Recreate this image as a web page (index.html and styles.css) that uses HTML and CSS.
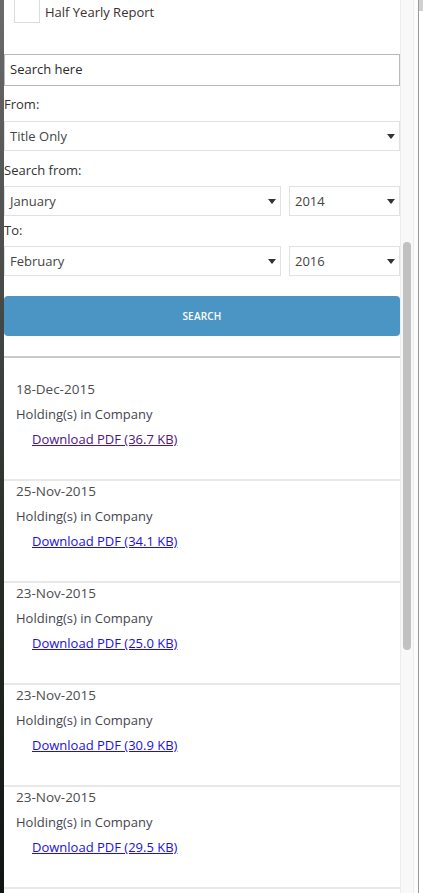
FILE: index.html
```html
<!DOCTYPE html>
<html>
<head>
<meta charset="utf-8">
<link rel="stylesheet" href="styles.css">
</head>
<body>
<div class="frame">
  <div class="backdrop"></div>
  <div class="panel">
    <div class="check-row">
      <span class="checkbox"></span>
      <span class="check-label">Half Yearly Report</span>
    </div>
    <div class="search-input">Search here</div>
    <div class="label label-from">From:</div>
    <div class="select">
      <span>Title Only</span>
      <span class="caret"></span>
    </div>
    <div class="label label-sfrom">Search from:</div>
    <div class="select-row">
      <div class="select grow"><span>January</span><span class="caret"></span></div>
      <div class="select year"><span>2014</span><span class="caret"></span></div>
    </div>
    <div class="label label-to">To:</div>
    <div class="select-row">
      <div class="select grow"><span>February</span><span class="caret"></span></div>
      <div class="select year"><span>2016</span><span class="caret"></span></div>
    </div>
    <div class="button">SEARCH</div>
    <div class="divider"></div>
    <div class="list">
      <div class="item">
        <div class="date">18-Dec-2015</div>
        <div class="title">Holding(s) in Company</div>
        <div class="link-line"><a class="link visited" href="#">Download PDF (36.7 KB)</a></div>
      </div>
      <div class="item">
        <div class="date">25-Nov-2015</div>
        <div class="title">Holding(s) in Company</div>
        <div class="link-line"><a class="link" href="#">Download PDF (34.1 KB)</a></div>
      </div>
      <div class="item">
        <div class="date">23-Nov-2015</div>
        <div class="title">Holding(s) in Company</div>
        <div class="link-line"><a class="link" href="#">Download PDF (25.0 KB)</a></div>
      </div>
      <div class="item">
        <div class="date">23-Nov-2015</div>
        <div class="title">Holding(s) in Company</div>
        <div class="link-line"><a class="link" href="#">Download PDF (30.9 KB)</a></div>
      </div>
      <div class="item">
        <div class="date">23-Nov-2015</div>
        <div class="title">Holding(s) in Company</div>
        <div class="link-line"><a class="link" href="#">Download PDF (29.5 KB)</a></div>
      </div>
    </div>
  </div>
  <div class="scrollbar"><div class="thumb"></div></div>
  <div class="gap"></div>
  <div class="edge-line"></div>
  <div class="edge"><div class="edge-top"></div></div>
</div>
</body>
</html>
```
FILE: styles.css
```css
html, body {
  margin: 0;
  padding: 0;
  height: 893px;
  overflow: hidden;
  background: #fff;
}
body {
  font-family: "Open Sans", "DejaVu Sans", sans-serif;
  font-size: 13px;
  color: #333;
}
.frame {
  display: flex;
  height: 893px;
  overflow: hidden;
}
.backdrop {
  width: 4px;
  flex: none;
  background: linear-gradient(to bottom, #6b6b6b 0%, #4a4d4a 30%, #2a2f2a 60%, #111511 100%);
}
.panel {
  width: 396px;
  flex: none;
  background: #fff;
}
.check-row {
  display: flex;
  align-items: center;
  height: 26px;
  margin-top: -3px;
}
.checkbox {
  width: 24px;
  height: 24px;
  border: 1px solid #dcdcdc;
  margin-left: 10px;
  box-sizing: content-box;
}
.check-label {
  margin-left: 5px;
  font-size: 13px;
  color: #3a3030;
  position: relative;
  top: 2px;
}
.search-input {
  margin-top: 31px;
  height: 32px;
  box-sizing: border-box;
  border: 1px solid #b9b9b9;
  padding-left: 5px;
  line-height: 28px;
  font-size: 13px;
  color: #2a2a2a;
}
.label {
  height: 18px;
  line-height: 18px;
  font-size: 13px;
  color: #333;
}
.label-from { margin-top: 9px; margin-bottom: 8px; }
.label-sfrom { margin-top: 10px; margin-bottom: 7px; }
.label-to { margin-top: 5px; margin-bottom: 7px; }
.select {
  height: 30px;
  box-sizing: border-box;
  border: 1px solid #e1e1e1;
  display: flex;
  align-items: center;
  justify-content: space-between;
  padding: 0 4px 0 5px;
  font-size: 13px;
  color: #444;
}
.caret {
  width: 0;
  height: 0;
  border-left: 4px solid transparent;
  border-right: 4px solid transparent;
  border-top: 5px solid #333;
  margin-top: 1px;
}
.select-row {
  display: flex;
  gap: 8px;
}
.grow { flex: 1; }
.year { width: 111px; flex: none; }
.button {
  margin-top: 20px;
  height: 40px;
  border-radius: 4px;
  background: #4b95c4;
  color: #fff;
  font-size: 10px;
  font-weight: 600;
  display: flex;
  align-items: center;
  justify-content: center;
  letter-spacing: 0.2px;
}
.divider {
  margin-top: 20px;
  height: 2px;
  background: #cacaca;
}
.list {
  padding-top: 21px;
}
.item {
  padding: 0 0 27px 12px;
  border-bottom: 2px solid #e8e8e8;
}
.date {
  height: 20px;
  line-height: 20px;
  color: #4d4d4d;
  font-size: 13.5px;
}
.title {
  margin-top: 3px;
  height: 24px;
  line-height: 24px;
  color: #444650;
}
.link-line {
  height: 26px;
  line-height: 26px;
  padding-left: 16px;
}
.link {
  color: #1a10e0;
  text-decoration: underline;
}
.link.visited {
  color: #4e1582;
}
.scrollbar {
  width: 14px;
  flex: none;
  box-sizing: border-box;
  border-left: 1px solid #ececec;
  border-right: 1px solid #ececec;
  background: #f8f8f8;
  padding-top: 242px;
  display: flex;
  justify-content: center;
}
.thumb {
  width: 8px;
  height: 408px;
  border-radius: 4px;
  background: #c1c1c1;
}
.gap {
  width: 4px;
  flex: none;
  background: #fcfcfc;
}
.edge-line {
  width: 1px;
  flex: none;
  background: #9a9a9a;
}
.edge {
  flex: 1;
  background: #fff;
}
.edge-top {
  height: 11px;
  background: #d0d0d0;
}
```
